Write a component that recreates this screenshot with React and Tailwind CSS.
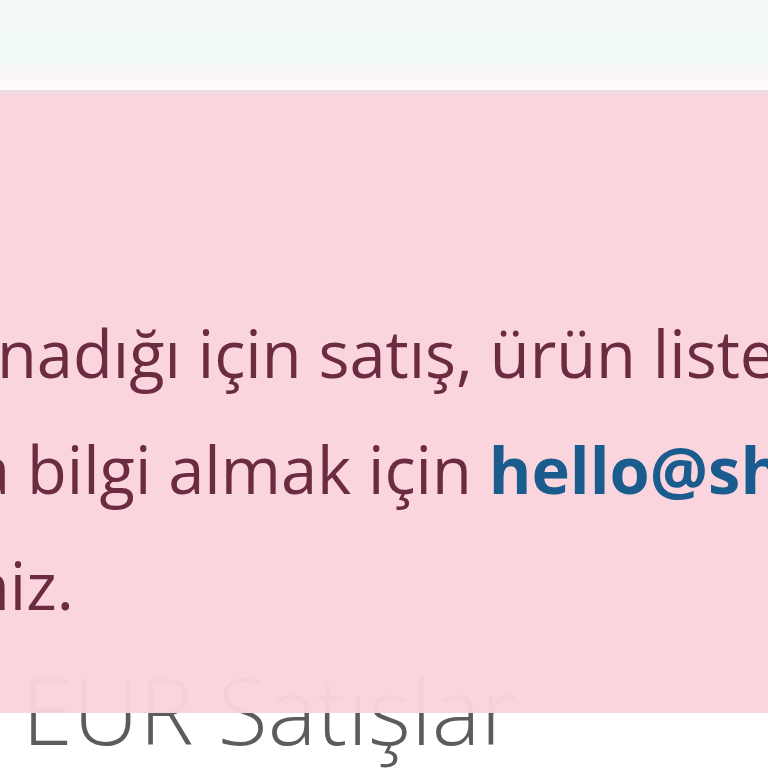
import React from "react";

export default function App() {
  return (
    <div className="h-[768px] w-[768px] overflow-hidden bg-white font-['Open_Sans',sans-serif]">
      {/* header strip */}
      <div className="h-[64px] bg-gradient-to-b from-[#f5f9f9] to-[#f0fbf8]" />
      <div className="h-[8px] bg-[#f7f7f8]" />
      <div className="h-[8px] bg-[#f9f4f7]" />
      <div className="h-[10px] bg-[#fefafd]" />
      <div className="h-[7px] bg-gradient-to-b from-[#eedfe4] to-[#f6d6de]" />

      {/* alert box */}
      <div className="relative z-10 bg-[#fad4dc]/[0.97] pt-[198px] pb-[70px] text-[65px] leading-[116px] text-[#6b2b40] whitespace-nowrap">
        <div className="-ml-[3px]">nadığı için satış, ürün listeleme</div>
        <div className="-ml-[26px]">a bilgi almak için <span className="font-bold text-[#1b5c8f]">hello@shopier.com</span></div>
        <div className="-ml-[30px]">niz.</div>
      </div>

      {/* next section heading, tucked under the alert */}
      <h2 className="-mt-[49px] pl-[22px] text-[92px] leading-none font-light text-[#5c5c5c] whitespace-nowrap">
        EUR Satışlar
      </h2>
    </div>
  );
}
